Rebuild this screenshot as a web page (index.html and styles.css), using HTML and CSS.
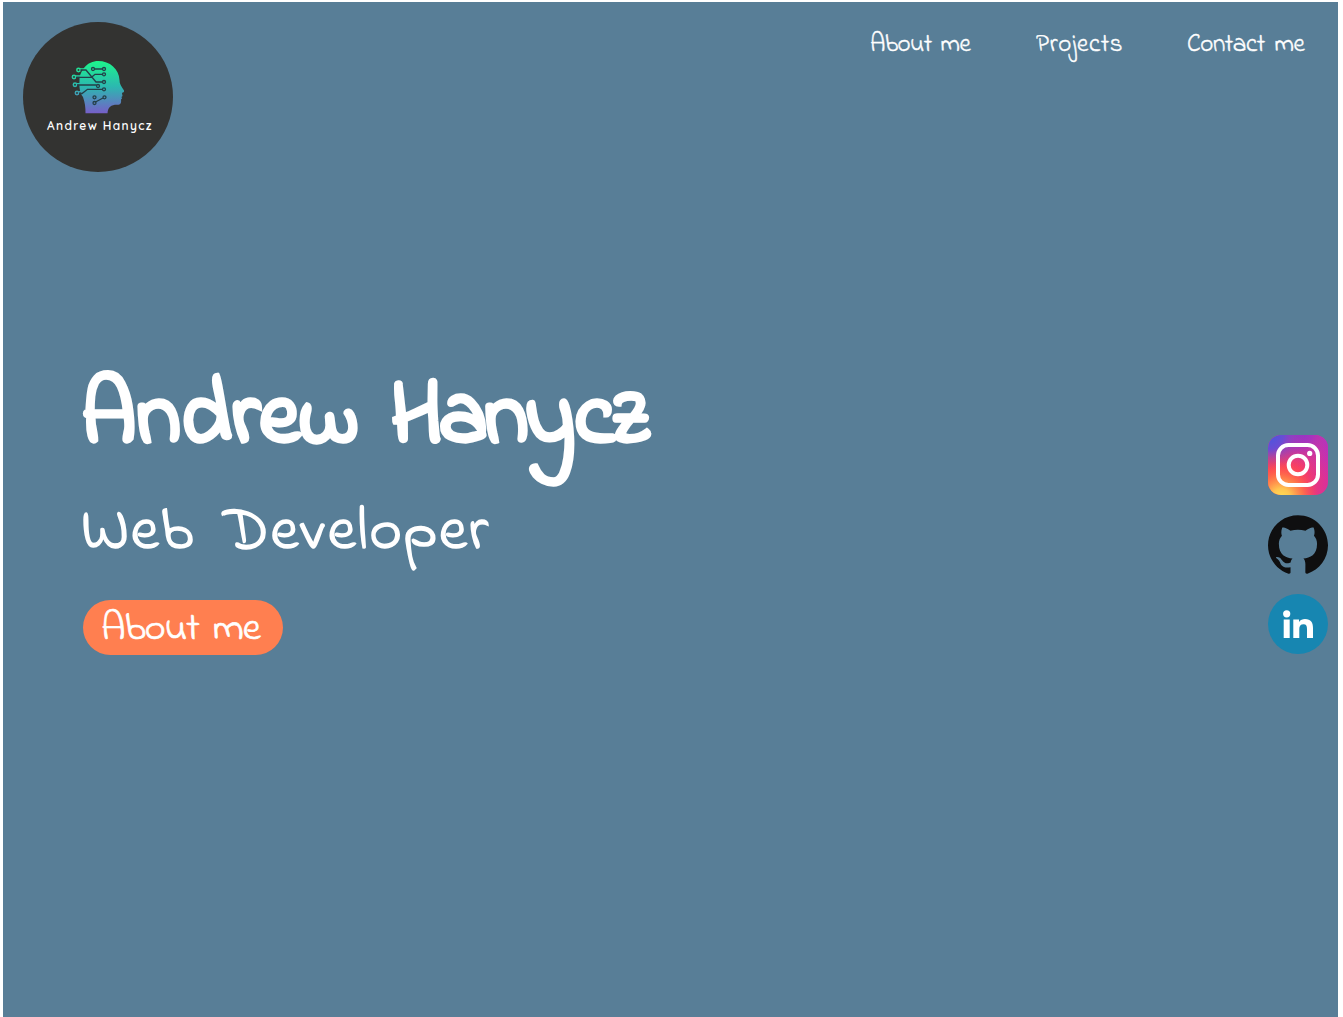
FILE: index.html
```html
<!DOCTYPE html>
<html lang="en">
<head>
<meta charset="utf-8">
<title>Andrew Hanycz</title>
<link rel="stylesheet" href="styles.css">
</head>
<body>
<div class="page">
  <header class="header">
    <a class="logo" href="#">
      <svg viewBox="23 22 150 150" width="150" height="150" role="img" aria-label="Andrew Hanycz logo">
        <defs>
          <linearGradient id="head" gradientUnits="userSpaceOnUse" x1="98" y1="61" x2="98" y2="113">
            <stop offset="0" stop-color="#1df58c"/>
            <stop offset=".5" stop-color="#2cb7b0"/>
            <stop offset="1" stop-color="#7660c8"/>
          </linearGradient>
        </defs>
        <circle cx="98" cy="97" r="75" fill="#333331"/>
        <path fill="url(#head)" d="M98 61C110 61 119 69 119.500 80C119.500 84 121 86 124 90.500C124.500 92 123 92.500 122 93L122.500 96L121.500 97L122 98.500L121 99.500C121.500 103 120.500 105 117 104.800C111 104.800 108 107 107.500 113.300H85.500C85.500 107 85 103 83 97C80 93 79 87 79.500 81C79 76 81 72 84 68C88 63 93 61 98 61Z"/>
        <g fill="none" stroke="url(#head)" stroke-width="1.500">
          <circle cx="78.500" cy="70" r="1.700"/><circle cx="74" cy="77" r="1.700"/>
          <circle cx="75" cy="84.700" r="1.700"/><circle cx="77" cy="93" r="1.700"/>
          <path d="M80 69H84M76 76H81M77 83.700H81M79 92L82 91"/>
        </g>
        <g fill="none" stroke="#243f48" stroke-width="1.300">
          <path d="M80.500 70H86L96 82H102.500M76 77.300H91.500L95 74.300H102.500M77 85H96.500M79 93.500H82L87.500 89.300H102.500M94 69H102.500M95.500 102L103 98"/>
          <circle cx="93" cy="69" r="1.500"/><circle cx="104" cy="69" r="1.500"/>
          <circle cx="104" cy="74.300" r="1.500"/><circle cx="104" cy="82" r="1.500"/>
          <circle cx="98" cy="86" r="1.500"/><circle cx="104" cy="89.300" r="1.500"/>
          <circle cx="94.500" cy="97.300" r="1.500"/><circle cx="104.500" cy="97.300" r="1.500"/>
          <circle cx="94.500" cy="103" r="1.500"/>
        </g>
        <text class="logo-name" x="47" y="129.800" textLength="104.500">Andrew Hanycz</text>
      </svg>
    </a>
    <nav class="nav">
      <a class="nav-about" href="#">About me</a>
      <a class="nav-projects" href="#">Projects</a>
      <a class="nav-contact" href="#">Contact me</a>
    </nav>
  </header>
  <main class="main">
    <section class="hero">
      <h1>Andrew <span class="surname">Hanycz</span></h1>
      <h2>Web Developer</h2>
      <a class="button" href="#">About me</a>
    </section>
    <aside class="social">
      <a href="#" aria-label="Instagram">
        <svg viewBox="0 0 60 60" width="60" height="60">
          <defs>
            <linearGradient id="ig" x1="0" y1="0" x2="1" y2="0"><stop offset="0" stop-color="#ff4550"/><stop offset=".55" stop-color="#f83e64"/><stop offset="1" stop-color="#d82f9c"/></linearGradient>
            <radialGradient id="igv" cx=".5" cy="-.05" r=".62"><stop offset="0" stop-color="#8a35cc"/><stop offset=".4" stop-color="#a533c0" stop-opacity=".9"/><stop offset="1" stop-color="#e13b8a" stop-opacity="0"/></radialGradient>
            <radialGradient id="igb" cx=".02" cy="0" r=".6"><stop offset="0" stop-color="#4658df"/><stop offset=".4" stop-color="#6a4cd4"/><stop offset="1" stop-color="#b938a8" stop-opacity="0"/></radialGradient>
            <radialGradient id="igp" cx="1" cy=".1" r=".65"><stop offset="0" stop-color="#a930cc"/><stop offset="1" stop-color="#c832ae" stop-opacity="0"/></radialGradient>
            <radialGradient id="igy" cx=".22" cy="1.050" r=".62"><stop offset="0" stop-color="#ffe055"/><stop offset=".25" stop-color="#ffc650"/><stop offset=".6" stop-color="#ff7848" stop-opacity=".85"/><stop offset="1" stop-color="#ff4550" stop-opacity="0"/></radialGradient>
          </defs>
          <rect width="60" height="60" rx="13" fill="url(#ig)"/>
          <rect width="60" height="60" rx="13" fill="url(#igp)"/>
          <rect width="60" height="60" rx="13" fill="url(#igv)"/>
          <rect width="60" height="60" rx="13" fill="url(#igb)"/>
          <rect width="60" height="60" rx="13" fill="url(#igy)"/>
          <g fill="none" stroke="#fff" stroke-width="4">
            <rect x="10" y="10" width="40" height="40" rx="10.500"/>
            <circle cx="30" cy="30" r="9.300"/>
          </g>
          <circle cx="41.700" cy="18.400" r="2.600" fill="#fff"/>
        </svg>
      </a>
      <a href="#" aria-label="GitHub">
        <svg viewBox="0 .2 24 24" width="60" height="60">
          <path fill="#0f0f10" d="M12 .297c-6.630 0-12 5.373-12 12 0 5.303 3.438 9.800 8.205 11.385.6.113.82-.258.82-.577 0-.285-.01-1.040-.015-2.040-3.338.724-4.042-1.610-4.042-1.610C4.422 18.070 3.633 17.700 3.633 17.700c-1.087-.744.084-.729.084-.729 1.205.084 1.838 1.236 1.838 1.236 1.070 1.835 2.809 1.305 3.495.998.108-.776.417-1.305.76-1.605-2.665-.3-5.466-1.332-5.466-5.930 0-1.310.465-2.380 1.235-3.220-.135-.303-.54-1.523.105-3.176 0 0 1.005-.322 3.300 1.230.96-.267 1.980-.399 3-.405 1.020.006 2.040.138 3 .405 2.280-1.552 3.285-1.230 3.285-1.230.645 1.653.24 2.873.12 3.176.765.84 1.230 1.910 1.230 3.220 0 4.610-2.805 5.625-5.475 5.920.42.36.81 1.096.81 2.220 0 1.606-.015 2.896-.015 3.286 0 .315.21.69.825.57C20.565 22.092 24 17.592 24 12.297c0-6.627-5.373-12-12-12"/>
        </svg>
      </a>
      <a href="#" aria-label="LinkedIn">
        <svg viewBox="0 0 60 60" width="60" height="60">
          <circle cx="30" cy="30" r="30" fill="#1786b1"/>
          <g fill="#fff">
            <circle cx="18.700" cy="19.800" r="3.600"/>
            <path d="M15.700 25.500H21.700V44H15.700ZM25.300 25.500H31V28C32.500 25.800 34.500 25 37 25C43 25 45 28.500 45 34V44H39V35C39 32 38.300 30.200 35.600 30.200C32.500 30.200 31.300 32.200 31.300 35V44H25.300Z"/>
          </g>
        </svg>
      </a>
    </aside>
  </main>
</div>
</body>
</html>
```
FILE: styles.css
```css
* { box-sizing: border-box; }
body {
  margin: 0;
  background: #fff;
  color: #fff;
  font-family: "Indie Flower", Lato, sans-serif;
  overflow: hidden;
}
a { color: inherit; text-decoration: none; }
svg { display: block; }
.page {
  height: 1015px;
  margin: 2px 5px 0 3px;
  background: #587e97;
}
.header {
  display: flex;
  justify-content: space-between;
  align-items: flex-start;
  height: 170px;
  padding: 20px 33px 0 20px;
}
.logo-name {
  fill: #fff;
  font: 600 12px "Quicksand", Lato, sans-serif;
}
.nav {
  display: flex;
  gap: 65px;
  padding-top: 8px;
  font-size: 25px;
  line-height: 30px;
  white-space: nowrap;
  -webkit-text-stroke: .4px #fff;
}
.nav-about { width: 101px; letter-spacing: -.5px; word-spacing: 3px; }
.nav-projects { width: 86px; letter-spacing: .7px; }
.nav-contact { width: 118px; letter-spacing: -.4px; word-spacing: 4px; }
.main {
  display: flex;
  justify-content: space-between;
  align-items: flex-start;
  padding: 185px 10px 0 80px;
}
.hero {
  display: flex;
  flex-direction: column;
  align-items: flex-start;
  padding-top: 3px;
  white-space: nowrap;
}
.hero h1 {
  margin: 0 0 0 -2px;
  font-size: 90px;
  font-weight: 700;
  line-height: 120px;
  word-spacing: 9px;
  -webkit-text-stroke: 2.500px #fff;
}
.surname { letter-spacing: -3.400px; }
.hero h2 {
  margin: 15px 0 0 -2px;
  font-size: 62px;
  font-weight: 400;
  line-height: 76px;
  letter-spacing: 1.800px;
  word-spacing: 11px;
  -webkit-text-stroke: 1.500px #fff;
}
.button {
  display: flex;
  align-items: center;
  width: 200px;
  height: 55px;
  margin-top: 29px;
  padding: 4px 0 0 18px;
  border-radius: 27.500px;
  background: #ff7f50;
  font-size: 40px;
  line-height: 50px;
  letter-spacing: -1px;
  word-spacing: 5px;
  -webkit-text-stroke: .7px #fff;
}
.social {
  display: flex;
  flex-direction: column;
  gap: 19.500px;
  padding-top: 78px;
}
```
